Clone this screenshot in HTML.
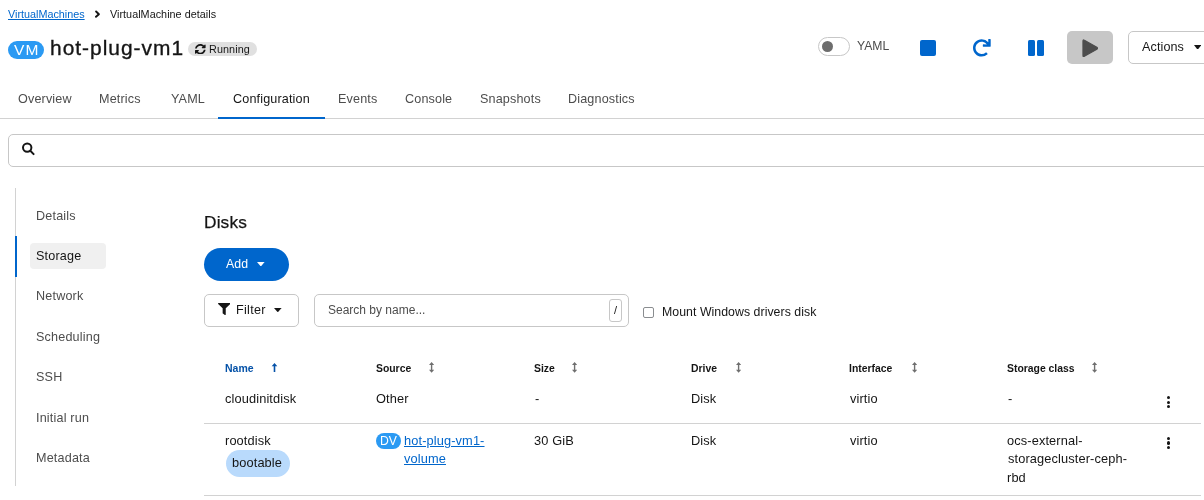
<!DOCTYPE html>
<html><head><meta charset="utf-8"><title>VirtualMachine details</title>
<style>
html,body{margin:0;padding:0;background:#fff;width:1204px;height:500px;overflow:hidden;}
body{position:relative;font-family:"Liberation Sans",sans-serif;}
.t{position:absolute;white-space:nowrap;will-change:transform;-webkit-font-smoothing:antialiased;}
.b{position:absolute;box-sizing:border-box;}
</style></head><body>
<div class="t" style="left:7.95px;top:7.00px;font-size:10.8px;line-height:14px;color:#0066cc;text-decoration:underline;">VirtualMachines</div>
<svg class="b" style="left:94px;top:10px;width:7px;height:8px" viewBox="0 0 7 8" preserveAspectRatio="none"><path d="M2.1 1.5 L4.9 4.2 L2.0 6.8" fill="none" stroke="#151515" stroke-width="1.9" stroke-linecap="round" stroke-linejoin="round"/></svg>
<div class="t" style="left:110.45px;top:7.00px;font-size:10.8px;line-height:14px;color:#151515;letter-spacing:0.03px;">VirtualMachine details</div>
<div class="b" style="left:8px;top:41px;width:36px;height:18px;background:#2b9af3;border-radius:9px;"></div>
<div class="t" style="left:14.13px;top:39.80px;font-size:15.54px;line-height:20px;color:#fff;letter-spacing:1.15px;">VM</div>
<div class="t" style="left:50.05px;top:33.70px;font-size:20.92px;line-height:27px;color:#151515;-webkit-text-stroke:0.35px #151515;letter-spacing:1.008px;">hot-plug-vm1</div>
<div class="b" style="left:188px;top:42px;width:69px;height:14px;background:#e0e0e0;border-radius:7px;"></div>
<svg class="b" style="left:195px;top:44px;width:10.599999999999994px;height:10.399999999999999px" viewBox="8 8 496 496" preserveAspectRatio="none"><path d="M370.72 133.28C339.458 104.008 298.888 87.962 255.848 88c-77.458.068-144.328 53.178-162.791 126.85-1.344 5.363-6.122 9.15-11.651 9.15H24.103c-7.498 0-13.194-6.807-11.807-14.176C33.933 94.924 134.813 8 256 8c66.448 0 126.791 26.136 171.315 68.685L463.03 40.97C478.149 25.851 504 36.559 504 57.941V192c0 13.255-10.745 24-24 24H345.941c-21.382 0-32.09-25.851-16.971-40.971l41.75-41.749zM32 296h134.059c21.382 0 32.09 25.851 16.971 40.971l-41.75 41.75c31.262 29.273 71.835 45.319 114.876 45.28 77.418-.07 144.315-53.144 162.787-126.849 1.344-5.363 6.122-9.15 11.651-9.15h57.304c7.498 0 13.194 6.807 11.807 14.176C478.067 417.076 377.187 504 256 504c-66.448 0-126.791-26.136-171.315-68.685L48.97 471.03C33.851 486.149 8 475.441 8 454.059V320c0-13.255 10.745-24 24-24z" fill="#151515"/></svg>
<div class="t" style="left:209.11px;top:41.70px;font-size:10.8px;line-height:14px;color:#151515;letter-spacing:0.1px;">Running</div>
<div class="b" style="left:818px;top:37px;width:32px;height:19px;border:1px solid #c7c7c7;border-radius:10px;box-sizing:border-box;"></div>
<div class="b" style="left:822px;top:41.3px;width:11px;height:11.0px;background:#6d6d6d;border-radius:50%;"></div>
<div class="t" style="left:857.03px;top:38.20px;font-size:12.2px;line-height:16px;color:#4d4d4d;">YAML</div>
<div class="b" style="left:920px;top:40px;width:16px;height:16px;background:#0066cc;border-radius:2px;"></div>
<svg class="b" style="left:973.3px;top:39px;width:17.700000000000045px;height:17.5px" viewBox="8 0 504 504" preserveAspectRatio="none"><path d="M500.33 0h-47.41a12 12 0 0 0-12 12.57l4 82.76A247.42 247.42 0 0 0 256 8C119.34 8 7.9 119.53 8 256.19 8.1 393.07 119.1 504 256 504a247.1 247.1 0 0 0 166.18-63.91 12 12 0 0 0 .48-17.43l-34-34a12 12 0 0 0-16.38-.55A176 176 0 1 1 402.1 157.8l-101.53-4.870a12 12 0 0 0-12.57 12v47.41a12 12 0 0 0 12 12h200.33a12 12 0 0 0 12-12V12a12 12 0 0 0-12-12z" fill="#0066cc"/></svg>
<div class="b" style="left:1028px;top:40px;width:6.7000000000000455px;height:16px;background:#0066cc;border-radius:1.5px;"></div>
<div class="b" style="left:1037.2px;top:40px;width:6.7000000000000455px;height:16px;background:#0066cc;border-radius:1.5px;"></div>
<div class="b" style="left:1067px;top:31px;width:46px;height:33px;background:#c7c7c7;border-radius:5px;"></div>
<svg class="b" style="left:1081.5px;top:38.5px;width:16.299999999999955px;height:18.5px" viewBox="0 0 17 18.5" preserveAspectRatio="none"><path d="M2.5 1.2 Q1 0.3 1 2 V16.5 Q1 18.2 2.5 17.3 L15.5 10.2 Q16.8 9.25 15.5 8.3 Z" fill="#4d4d4d" stroke="#4d4d4d" stroke-width="1.2" stroke-linejoin="round"/></svg>
<div class="b" style="left:1128px;top:31px;width:112px;height:33px;border:1px solid #c7c7c7;border-radius:5px;box-sizing:border-box;"></div>
<div class="t" style="left:1142.48px;top:39.00px;font-size:12.6px;line-height:16px;color:#151515;letter-spacing:0.1px;">Actions</div>
<svg class="b" style="left:1193.7px;top:44.5px;width:7.2999999999999545px;height:4.799999999999997px" viewBox="0 0 8 5" preserveAspectRatio="none"><path d="M0 0H8L4 5Z" fill="#151515"/></svg>
<div class="b" style="left:0px;top:118px;width:1204px;height:1px;background:#d2d2d2;"></div>
<div class="t" style="left:18.40px;top:91.00px;font-size:12.6px;line-height:16px;color:#4d4d4d;letter-spacing:0.15px;">Overview</div>
<div class="t" style="left:99.47px;top:91.00px;font-size:12.6px;line-height:16px;color:#4d4d4d;letter-spacing:0.15px;">Metrics</div>
<div class="t" style="left:170.72px;top:91.00px;font-size:12.6px;line-height:16px;color:#4d4d4d;letter-spacing:0.15px;">YAML</div>
<div class="t" style="left:233.06px;top:91.00px;font-size:12.6px;line-height:16px;color:#151515;letter-spacing:0.15px;">Configuration</div>
<div class="t" style="left:337.97px;top:91.00px;font-size:12.6px;line-height:16px;color:#4d4d4d;letter-spacing:0.15px;">Events</div>
<div class="t" style="left:405.36px;top:91.00px;font-size:12.6px;line-height:16px;color:#4d4d4d;letter-spacing:0.15px;">Console</div>
<div class="t" style="left:479.93px;top:91.00px;font-size:12.6px;line-height:16px;color:#4d4d4d;letter-spacing:0.15px;">Snapshots</div>
<div class="t" style="left:567.67px;top:91.00px;font-size:12.6px;line-height:16px;color:#4d4d4d;letter-spacing:0.15px;">Diagnostics</div>
<div class="b" style="left:218px;top:117px;width:107px;height:2px;background:#0066cc;"></div>
<div class="b" style="left:8px;top:134px;width:1232px;height:33px;border:1px solid #c7c7c7;border-radius:5px;box-sizing:border-box;"></div>
<svg class="b" style="left:21px;top:142px;width:14px;height:14px" viewBox="0 0 14 14" preserveAspectRatio="none"><circle cx="6.2" cy="5.6" r="4.2" fill="none" stroke="#151515" stroke-width="2"/><path d="M9.3 8.8 L12.6 12.1" stroke="#151515" stroke-width="2" stroke-linecap="round"/></svg>
<div class="b" style="left:15px;top:188px;width:1px;height:298px;background:#d2d2d2;"></div>
<div class="b" style="left:15px;top:236px;width:2px;height:41px;background:#0066cc;"></div>
<div class="b" style="left:30px;top:243px;width:76px;height:26px;background:#f0f0f0;border-radius:4px;"></div>
<div class="t" style="left:35.97px;top:207.50px;font-size:12.6px;line-height:16px;color:#4d4d4d;letter-spacing:0.18px;">Details</div>
<div class="t" style="left:36.43px;top:248.30px;font-size:12.6px;line-height:16px;color:#151515;letter-spacing:0.18px;">Storage</div>
<div class="t" style="left:35.97px;top:288.30px;font-size:12.6px;line-height:16px;color:#4d4d4d;letter-spacing:0.18px;">Network</div>
<div class="t" style="left:36.43px;top:329.20px;font-size:12.6px;line-height:16px;color:#4d4d4d;letter-spacing:0.18px;">Scheduling</div>
<div class="t" style="left:36.43px;top:369.30px;font-size:12.6px;line-height:16px;color:#4d4d4d;letter-spacing:0.18px;">SSH</div>
<div class="t" style="left:35.84px;top:410.30px;font-size:12.6px;line-height:16px;color:#4d4d4d;letter-spacing:0.18px;">Initial run</div>
<div class="t" style="left:35.97px;top:450.30px;font-size:12.6px;line-height:16px;color:#4d4d4d;letter-spacing:0.18px;">Metadata</div>
<div class="t" style="left:203.68px;top:211.00px;font-size:17.3px;line-height:22px;color:#151515;letter-spacing:0.15px;-webkit-text-stroke:0.25px #151515;">Disks</div>
<div class="b" style="left:204px;top:248px;width:85px;height:33px;background:#0066cc;border-radius:17px;"></div>
<div class="t" style="left:225.58px;top:256.00px;font-size:12.3px;line-height:16px;color:#fff;letter-spacing:0.1px;">Add</div>
<svg class="b" style="left:257.4px;top:261.7px;width:7.600000000000023px;height:4.5px" viewBox="0 0 8 5" preserveAspectRatio="none"><path d="M0 0H8L4 5Z" fill="#fff"/></svg>
<div class="b" style="left:204px;top:294px;width:95px;height:33px;border:1px solid #c7c7c7;border-radius:5px;box-sizing:border-box;"></div>
<svg class="b" style="left:218px;top:303px;width:12.400000000000006px;height:12px" viewBox="0 0 512 512" preserveAspectRatio="none"><path d="M487.976 0H24.028C2.71 0-8.047 25.866 7.058 40.971L192 225.941V432c0 7.831 3.821 15.17 10.237 19.662l80 55.98C298.02 518.69 320 507.493 320 487.98V225.941l184.947-184.97C520.021 25.896 509.338 0 487.976 0z" fill="#151515"/></svg>
<div class="t" style="left:235.87px;top:301.90px;font-size:12.6px;line-height:16px;color:#151515;letter-spacing:0.3px;">Filter</div>
<svg class="b" style="left:274.4px;top:308px;width:7.600000000000023px;height:4.300000000000011px" viewBox="0 0 8 5" preserveAspectRatio="none"><path d="M0 0H8L4 5Z" fill="#151515"/></svg>
<div class="b" style="left:314px;top:294px;width:315px;height:33px;border:1px solid #c7c7c7;border-radius:5px;box-sizing:border-box;"></div>
<div class="t" style="left:328.06px;top:301.80px;font-size:12px;line-height:16px;color:#4d4d4d;">Search by name...</div>
<div class="b" style="left:609px;top:298.5px;width:13px;height:23.0px;border:1px solid #c7c7c7;border-radius:3px;box-sizing:border-box;"></div>
<div class="t" style="left:613.50px;top:303.00px;font-size:11px;line-height:14px;color:#151515;">/</div>
<div class="b" style="left:643px;top:307px;width:11px;height:11px;border:1px solid #8a8d90;border-radius:2px;box-sizing:border-box;"></div>
<div class="t" style="left:661.59px;top:304.10px;font-size:12.3px;line-height:16px;color:#151515;letter-spacing:0.05px;">Mount Windows drivers disk</div>
<div class="t" style="left:224.80px;top:361.20px;font-size:10.5px;line-height:14px;color:#0552a8;font-weight:700;">Name</div>
<svg class="b" style="left:271px;top:362.5px;width:7px;height:9.5px" viewBox="0 0 7 9.5" preserveAspectRatio="none"><path d="M3.5 0 L6.3 3.2 H4.3 V9.3 H2.7 V3.2 H0.7 Z" fill="#0552a8"/></svg>
<div class="t" style="left:375.70px;top:361.70px;font-size:10.4px;line-height:14px;color:#151515;font-weight:700;">Source</div>
<svg class="b" style="left:428.8px;top:362px;width:5.199999999999989px;height:10.800000000000011px" viewBox="0 0 5.2 10.8" preserveAspectRatio="none"><path d="M2.6 0 L5.2 3 H3.3 V7.8 H5.2 L2.6 10.8 L0 7.8 H1.9 V3 H0 Z" fill="#6f6f6f"/></svg>
<div class="t" style="left:533.60px;top:361.70px;font-size:10.4px;line-height:14px;color:#151515;font-weight:700;">Size</div>
<svg class="b" style="left:572px;top:362px;width:5.2000000000000455px;height:10.800000000000011px" viewBox="0 0 5.2 10.8" preserveAspectRatio="none"><path d="M2.6 0 L5.2 3 H3.3 V7.8 H5.2 L2.6 10.8 L0 7.8 H1.9 V3 H0 Z" fill="#6f6f6f"/></svg>
<div class="t" style="left:691.20px;top:361.70px;font-size:10.4px;line-height:14px;color:#151515;font-weight:700;">Drive</div>
<svg class="b" style="left:736px;top:362px;width:5.2000000000000455px;height:10.800000000000011px" viewBox="0 0 5.2 10.8" preserveAspectRatio="none"><path d="M2.6 0 L5.2 3 H3.3 V7.8 H5.2 L2.6 10.8 L0 7.8 H1.9 V3 H0 Z" fill="#6f6f6f"/></svg>
<div class="t" style="left:849.00px;top:361.70px;font-size:10.4px;line-height:14px;color:#151515;font-weight:700;">Interface</div>
<svg class="b" style="left:911.7px;top:362px;width:5.2000000000000455px;height:10.800000000000011px" viewBox="0 0 5.2 10.8" preserveAspectRatio="none"><path d="M2.6 0 L5.2 3 H3.3 V7.8 H5.2 L2.6 10.8 L0 7.8 H1.9 V3 H0 Z" fill="#6f6f6f"/></svg>
<div class="t" style="left:1006.60px;top:361.70px;font-size:10.4px;line-height:14px;color:#151515;font-weight:700;">Storage class</div>
<svg class="b" style="left:1091.6px;top:362px;width:5.2000000000000455px;height:10.800000000000011px" viewBox="0 0 5.2 10.8" preserveAspectRatio="none"><path d="M2.6 0 L5.2 3 H3.3 V7.8 H5.2 L2.6 10.8 L0 7.8 H1.9 V3 H0 Z" fill="#6f6f6f"/></svg>
<div class="t" style="left:224.96px;top:390.00px;font-size:12.8px;line-height:17px;color:#151515;letter-spacing:0.12px;">cloudinitdisk</div>
<div class="t" style="left:375.89px;top:390.00px;font-size:12.8px;line-height:17px;color:#151515;letter-spacing:0.12px;">Other</div>
<div class="t" style="left:535.13px;top:390.00px;font-size:12.8px;line-height:17px;color:#151515;letter-spacing:0.12px;">-</div>
<div class="t" style="left:691.25px;top:390.00px;font-size:12.8px;line-height:17px;color:#151515;letter-spacing:0.12px;">Disk</div>
<div class="t" style="left:850.06px;top:390.00px;font-size:12.8px;line-height:17px;color:#151515;letter-spacing:0.12px;">virtio</div>
<div class="t" style="left:1008.33px;top:390.00px;font-size:12.8px;line-height:17px;color:#151515;letter-spacing:0.12px;">-</div>
<div class="b" style="left:1166.9px;top:396.2px;width:3.199999999999818px;height:3.2000000000000455px;background:#151515;border-radius:50%;"></div>
<div class="b" style="left:1166.9px;top:400.5px;width:3.199999999999818px;height:3.2000000000000455px;background:#151515;border-radius:50%;"></div>
<div class="b" style="left:1166.9px;top:404.8px;width:3.199999999999818px;height:3.2000000000000455px;background:#151515;border-radius:50%;"></div>
<div class="b" style="left:204px;top:423px;width:997px;height:1px;background:#d2d2d2;"></div>
<div class="t" style="left:224.75px;top:432.00px;font-size:12.8px;line-height:17px;color:#151515;letter-spacing:0.12px;">rootdisk</div>
<div class="b" style="left:226px;top:450px;width:64px;height:27px;background:#b9dafc;border-radius:13.5px;"></div>
<div class="t" style="left:232.18px;top:454.30px;font-size:12.8px;line-height:17px;color:#151515;letter-spacing:0.12px;">bootable</div>
<div class="b" style="left:376px;top:433px;width:25px;height:16px;background:#2b9af3;border-radius:8px;"></div>
<div class="t" style="left:379.70px;top:433.00px;font-size:12.2px;line-height:16px;color:#fff;">DV</div>
<div class="t" style="left:403.51px;top:432.00px;font-size:12.8px;line-height:17px;color:#0066cc;text-decoration:underline;letter-spacing:0.12px;">hot-plug-vm1-</div>
<div class="t" style="left:404.36px;top:450.00px;font-size:12.8px;line-height:17px;color:#0066cc;text-decoration:underline;letter-spacing:0.12px;">volume</div>
<div class="t" style="left:534.01px;top:432.00px;font-size:12.8px;line-height:17px;color:#151515;letter-spacing:0.12px;">30 GiB</div>
<div class="t" style="left:691.25px;top:432.00px;font-size:12.8px;line-height:17px;color:#151515;letter-spacing:0.12px;">Disk</div>
<div class="t" style="left:850.06px;top:432.00px;font-size:12.8px;line-height:17px;color:#151515;letter-spacing:0.12px;">virtio</div>
<div class="t" style="left:1007.46px;top:432.30px;font-size:12.8px;line-height:17px;color:#151515;letter-spacing:0.12px;">ocs-external-</div>
<div class="t" style="left:1007.64px;top:450.00px;font-size:12.8px;line-height:17px;color:#151515;letter-spacing:0.12px;">storagecluster-ceph-</div>
<div class="t" style="left:1007.15px;top:469.00px;font-size:12.8px;line-height:17px;color:#151515;letter-spacing:0.12px;">rbd</div>
<div class="b" style="left:1166.9px;top:437.09999999999997px;width:3.199999999999818px;height:3.2000000000000455px;background:#151515;border-radius:50%;"></div>
<div class="b" style="left:1166.9px;top:441.4px;width:3.199999999999818px;height:3.2000000000000455px;background:#151515;border-radius:50%;"></div>
<div class="b" style="left:1166.9px;top:445.7px;width:3.199999999999818px;height:3.2000000000000455px;background:#151515;border-radius:50%;"></div>
<div class="b" style="left:204px;top:495px;width:997px;height:1px;background:#d2d2d2;"></div>
</body></html>
